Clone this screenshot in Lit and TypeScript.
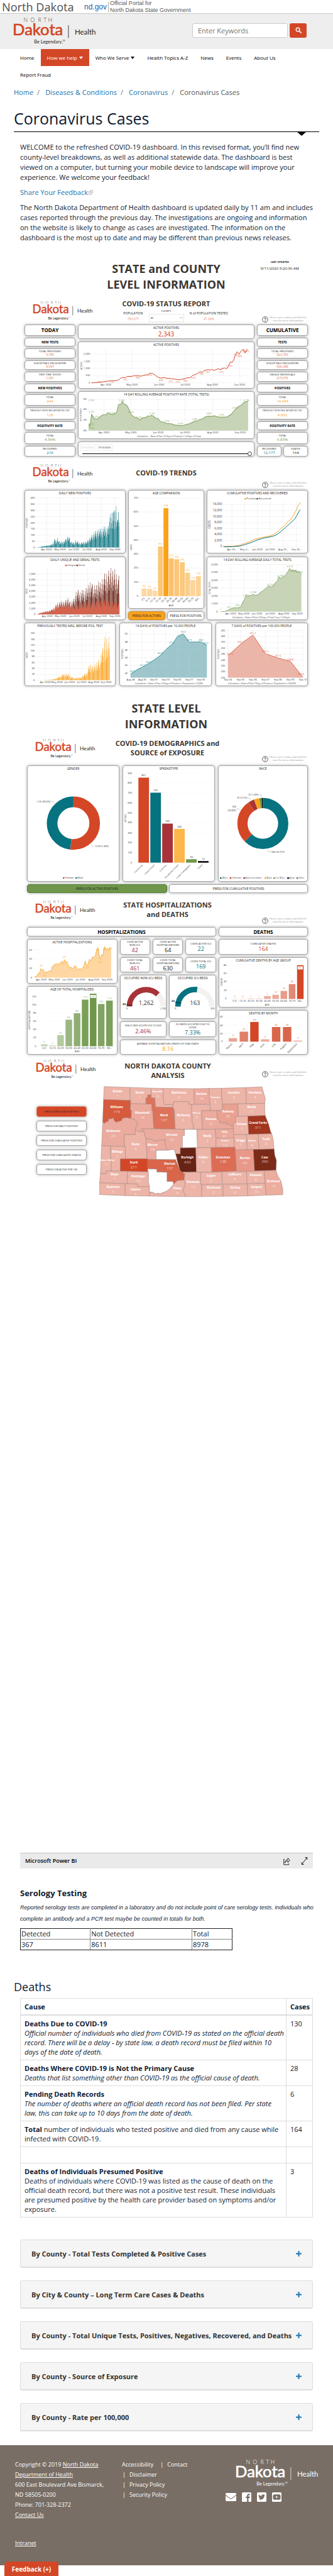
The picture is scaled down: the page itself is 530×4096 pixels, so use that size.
import { LitElement, html, svg, css } from "lit";
import { customElement, property } from "lit/decorators.js";
import { classMap } from "lit/directives/class-map.js";

type Box = [number, number, number, number];
type Label = [string | number, number, number, string?, number?, string?, number?];

/* ---------- chart helpers: sheet units are half width, ky height ---------- */

const LINE = 1 / 3;
const TREND = 1 / 2.8;
const HEAD = 15;

const texts = (ky: number, labels: Label[]) =>
  labels.map(([t, x, y, anchor = "middle", size = 6, cls = "ink", rot = 0]) => {
    const px = x / 2;
    const py = y * ky;
    return svg`<text class=${cls} x=${px} y=${py} text-anchor=${anchor} font-size=${size}
      transform=${`rotate(${rot} ${px} ${py})`}>${t}</text>`;
  });

const plot = (ky: number, [x0, y0, x1, y1]: Box, name: string, shapes: unknown, labels: Label[], raw: unknown = "") => html`
  <svg class="plot" role="img" aria-label=${name}
    viewBox="${(x0 + 3) / 2} ${y0 * ky + HEAD} ${(x1 - x0 - 6) / 2} ${(y1 - y0) * ky - HEAD - 1}">
    ${svg`<g transform=${`scale(0.5 ${ky})`}>${shapes}</g>${raw}${texts(ky, labels)}`}
  </svg>`;

const rules = (x0: number, x1: number, ys: number[], y0 = 0, y1 = 0, xs: number[] = []) =>
  svg`<path class="rule" d=${ys.map((y) => `M${x0} ${y}H${x1}`).join("") + xs.map((x) => `M${x} ${y0}V${y1}`).join("")}></path>`;

const line = (points: string, color: string) =>
  svg`<polyline class="trace" points=${points} stroke=${color}></polyline>`;

const area = (points: string, base: number, fill: string, stroke: string) => {
  const all = points.split(" ");
  const first = all[0].split(",")[0];
  const last = all[all.length - 1].split(",")[0];
  return svg`<polygon points=${`${first},${base} ${points} ${last},${base}`} fill=${fill}></polygon>${line(points, stroke)}`;
};

const steps = (x: number, ys: number[], names: (string | number)[], size = 6): Label[] =>
  ys.map((y, i) => [names[i], x, y + 5, "end", size]);

const along = (y: number, xs: number[], names: string[], size = 6): Label[] =>
  xs.map((x, i) => [names[i], x, y, "middle", size]);

const MONTHS = ["Apr 2020", "May 2020", "Jun 2020", "Jul 2020", "Aug 2020", "Sep 2020"];

/* Daily columns between knots of [x, value], with a day to day swing. */
const daily = (knots: [number, number][], base: number, unit: number, color: string, seed: number) => {
  const tones = ["", ""];
  const end = knots[knots.length - 1][0];
  let i = 0;
  let k = 0;
  for (let x = knots[0][0]; x < end; x += 2.07, i++) {
    while (k < knots.length - 2 && x > knots[k + 1][0]) k++;
    const [xa, va] = knots[k];
    const [xb, vb] = knots[k + 1];
    const swing = 0.5 + (((i * 37 + seed * 11) * 53) % 97) / 97 * 0.6;
    const top = base - (va + ((vb - va) * (x - xa)) / (xb - xa)) * swing * unit;
    tones[Math.floor(i / 5) % 2] += `M${x.toFixed(1)} ${base}V${top.toFixed(1)}h2.1V${base}z`;
  }
  return svg`<path d=${tones[0]} fill=${color}></path><path d=${tones[1]} fill=${color} opacity="0.75"></path>`;
};

const columns = (xs: number[], tops: number[], width: number, base: number, colors: string[]) =>
  xs.map((x, i) => svg`<rect x=${x} y=${tops[i]} width=${width} height=${base - tops[i]} fill=${colors[i % colors.length]}></rect>`);

const ring = (cx: number, cy: number, r: number, w: number, parts: [number, string][]) => {
  let start = 0;
  return parts.map(([share, color]) => {
    const turn = start * 3.6 - 90;
    start += share;
    return svg`<circle cx=${cx} cy=${cy} r=${r} fill="none" stroke=${color} stroke-width=${w} pathLength="100"
      stroke-dasharray=${`${share} ${100 - share}`} transform=${`rotate(${turn} ${cx} ${cy})`}></circle>`;
  });
};

const gauge = (cx: number, cy: number, share: number, mark: number, color: string) => {
  const arc = `M${cx - 40} ${cy}A40 40 0 0 1 ${cx + 40} ${cy}`;
  const a = Math.PI * (1 - mark);
  const at = (r: number) => `${cx + r * Math.cos(a)} ${cy - r * Math.sin(a)}`;
  return svg`<path d=${arc} fill="none" stroke="#f3f2f1" stroke-width="13"></path>
    <path d=${arc} fill="none" stroke=${color} stroke-width="13" pathLength="100" stroke-dasharray=${`${share * 100} 200`}></path>
    <path d=${`M${at(33)}L${at(48)}`} stroke="#000" stroke-width="1"></path>`;
};

/* ---------- chart content ---------- */

const RED = "#d34727";
const GREEN = "#7da05c";
const TEAL = "#077280";

const activePositives = () => {
  const box: Box = [368, 435, 1197, 770];
  const ys = [525, 576, 627, 678, 730];
  const xs = [496, 620, 749, 874, 1003, 1132];
  const pts = "427,730 460,727 480,723 500,719 520,715 545,714 556,710 565,698 575,692 590,692 598,684 618,684 628,680 655,680 662,683 672,678 685,673 695,673 702,662 716,662 724,669 735,681 745,691 760,697 770,691 780,696 795,698 810,701 825,704 840,708 858,705 872,700 882,694 895,694 908,678 918,672 930,665 938,655 948,651 955,656 963,642 975,638 985,635 990,640 998,634 1004,640 1020,637 1028,630 1045,636 1048,626 1060,625 1062,622 1068,629 1075,622 1080,605 1088,582 1097,584 1104,566 1110,537 1120,508 1130,524 1138,505 1150,490 1158,517 1165,495 1171,490";
  const marks: [string, number, number][] = [["28", 463, 730], ["132", 525, 731], ["376", 588, 714], ["490", 647, 701], ["670", 704, 683], ["320", 758, 718], ["272", 804, 725], ["210", 837, 731], ["300", 874, 722], ["520", 912, 699], ["768", 949, 675], ["921", 982, 659], ["915", 1045, 659], ["1,320", 1082, 616], ["2,161", 1119, 533], ["1,999", 1128, 548], ["2,343", 1161, 512]];
  return plot(LINE, box, "Active positives", [rules(426, 1175, ys, 490, 730, xs), line(pts, RED)], [
    ...steps(420, ys, ["2,000", "1,500", "1,000", "500", "0"]),
    ...along(749, xs, MONTHS),
    ...marks.map(([t, x, y]): Label => [t, x, y, "middle", 6, "coral"]),
    ["ACTIVES", 384, 608, "middle", 5, "ink", -90],
  ]);
};

const positivityRate = () => {
  const box: Box = [368, 786, 1197, 1123];
  const ys = [844, 917, 991, 1065];
  const xs = [489, 616, 745, 871, 1002, 1132];
  const pts = "417,1020 422,1038 426,1000 431,948 436,965 444,982 458,982 464,976 470,967 484,953 498,953 508,938 518,948 532,950 545,942 552,925 557,884 563,879 570,878 575,857 585,880 592,880 600,893 610,925 618,953 628,965 638,973 648,975 656,990 668,978 676,973 686,974 695,962 708,961 715,957 725,966 734,978 745,979 755,1002 770,1006 785,1014 810,1018 822,1026 850,1030 865,1028 875,1022 890,1018 905,1008 915,1000 930,997 942,984 952,984 965,970 980,963 1000,964 1010,960 1018,966 1035,970 1070,969 1078,960 1090,950 1100,930 1110,915 1124,894 1132,890 1140,880 1152,862 1160,862 1169,855";
  const marks: [string, number, number][] = [["5.9%", 430, 857], ["5.6%", 573, 857], ["3.2%", 430, 938], ["2.2%", 449, 975], ["3.1%", 528, 945], ["3.1%", 616, 941], ["2.1%", 653, 979], ["2.9%", 716, 950], ["1.4%", 784, 1004], ["0.9%", 850, 1022], ["1.8%", 917, 989], ["2.8%", 984, 953], ["2.5%", 1043, 962], ["3.9%", 1107, 911], ["5.7%", 1162, 857], ["0.8%", 429, 1028], ["0.0%", 429, 1055]];
  return plot(LINE, box, "Positivity rate", [area(pts, 1065, "#c7d4b6", GREEN), rules(415, 1172, ys, 844, 1065, xs)], [
    ...steps(408, ys, ["6%", "4%", "2%", "0%"]),
    ...along(1085, xs, MONTHS),
    ...marks.map(([t, x, y]): Label => [t, x, y, "middle", 6, "leaf"]),
    ["% POSITIVITY", 384, 953, "middle", 5, "ink", -90],
    ["Calculation = (Sum of Past 14 Days of Positives / 14 Days of Tests)", 796, 1109, "middle", 5],
  ]);
};

const dailyNew = () => {
  const ys = [588, 548, 507, 466, 426, 385, 344, 303, 263];
  const xs = [220, 284, 349, 412, 477, 542];
  const knots: [number, number][] = [[176, 1], [190, 6], [210, 14], [225, 18], [245, 24], [252, 40], [256, 95], [262, 40], [272, 75], [280, 45], [300, 50], [315, 80], [325, 88], [335, 45], [350, 40], [357, 60], [370, 38], [400, 42], [415, 60], [425, 90], [440, 105], [455, 145], [470, 135], [480, 150], [490, 160], [500, 165], [510, 170], [516, 260], [520, 250], [530, 290], [534, 360], [540, 250], [545, 350], [550, 330], [555, 250], [560, 330], [563, 240]];
  return plot(TREND, [117, 209, 591, 626], "Daily new positives", [rules(172, 565, ys, 263, 588, xs), daily(knots, 588, 0.812, "#2b8792", 3)], [
    ...steps(165, ys, [0, 50, 100, 150, 200, 250, 300, 350, 400]),
    ...along(606, xs, MONTHS),
    ["POSITIVES", 132, 427, "middle", 5, "ink", -90],
  ]);
};

const dots = (y: number, items: [string, string, number][], size = 6): { raw: (ky: number) => unknown; labels: Label[] } => ({
  raw: (ky) => items.map(([, color, x]) => svg`<circle cx=${x / 2 - 3} cy=${(y - 5) * ky} r="2" fill=${color}></circle>`),
  labels: items.map(([t, , x]): Label => [t, x, y, "start", size]),
});

const dailyTests = () => {
  const ys = [1027, 989, 951, 913, 876, 838, 800, 762];
  const xs = [224, 286, 351, 413, 478, 542];
  const total: [number, number][] = [[178, 30], [190, 250], [210, 450], [240, 700], [260, 1000], [270, 2000], [300, 2200], [320, 2600], [335, 1900], [350, 2900], [360, 4000], [380, 3800], [400, 4400], [415, 4600], [428, 6000], [440, 4400], [460, 5300], [480, 5800], [500, 7000], [515, 7300], [535, 7500], [550, 7000], [562, 6300]];
  const unique: [number, number][] = [[178, 20], [190, 240], [240, 700], [270, 1800], [320, 2000], [350, 1500], [380, 1700], [420, 2000], [470, 2300], [520, 2200], [562, 1900]];
  const legend = dots(711, [["Unique", "#d9583c", 318], ["Serial", "#7a3528", 370]]);
  return plot(TREND, [117, 647, 591, 1064], "Daily unique and serial tests",
    [rules(172, 562, ys, 728, 1027, xs), daily(total, 1027, 0.0379, "#7e4034", 5), daily(unique, 1027, 0.0379, "#dc6048", 8)],
    [...steps(168, ys, ["0", "1,000", "2,000", "3,000", "4,000", "5,000", "6,000", "7,000"]), ...along(1046, xs, MONTHS), ...legend.labels,
      ["TESTS", 132, 876, "middle", 5, "ink", -90]],
    legend.raw(TREND));
};

const ages = () => {
  const ys = [910, 818, 725, 633, 540, 448, 355, 263];
  const xs = [665, 691, 716, 742, 768, 793, 819, 845, 870, 895, 921];
  const tops = [860, 862, 874, 583, 330, 661, 667, 686, 755, 804, 778];
  const cats = ["0-5", "6-11", "12-14", "15-19", "20-29", "30-39", "40-49", "50-59", "60-69", "70-79", "80+"];
  const counts = [56, 54, 42, 355, 628, 272, 263, 244, 169, 116, 144];
  const tones = ["#fdd7a0", "#fdd7a0", "#fdd9a6", "#fcc676", "#faa21b", "#fcc06a", "#fcc678", "#fcc87c", "#fcce8a", "#fdd49a", "#fdd294"];
  return plot(TREND, [603, 209, 960, 992], "Age comparison", [rules(653, 950, ys), columns(xs, tops, 23, 910, tones)], [
    ...steps(648, ys, [0, 100, 200, 300, 400, 500, 600, 700]),
    ...counts.map((n, i): Label => [n, xs[i] + 11, tops[i] - 11, "middle", 6, "amber"]),
    ...cats.map((c, i): Label => [c, xs[i] + 16, 926, "end", 6, "ink", -40]),
    ["AGE", 804, 978],
    ["CASES", 619, 588, "middle", 5, "ink", -90],
  ]);
};

const cumulative = () => {
  const ys = [583, 543, 504, 464, 425, 385, 345, 305];
  const xs = [1090, 1149, 1210, 1270, 1331, 1393];
  const up = "1050,582 1090,580 1120,575 1140,566 1155,558 1170,552 1190,537 1210,530 1230,523 1270,512 1285,503 1300,490 1320,465 1340,440 1355,415 1363,410 1372,390 1380,375 1387,352 1393,343 1398,320 1406,303 1411,291";
  const low = "1050,584 1090,583 1130,578 1150,569 1170,561 1190,550 1210,538 1240,526 1270,518 1285,513 1300,504 1320,484 1345,452 1360,433 1372,418 1385,400 1395,378 1403,355 1411,340";
  const legend = dots(273, [["Positives", "#faa21b", 1159], ["Recovered", TEAL, 1215]]);
  return plot(TREND, [972, 209, 1445, 626], "Cumulative positives and recovered",
    [rules(1050, 1418, ys, 290, 583, xs), line(up, "#fba630"), line(low, TEAL)],
    [...steps(1043, ys, ["0", "2,000", "4,000", "6,000", "8,000", "10,000", "12,000", "14,000"], 7),
      ...along(607, xs, ["Apr 20…", "May 2…", "Jun 2020", "Jul 2020", "Aug 20…", "Sep 20…"], 6),
      ...legend.labels, ["CASES", 990, 437, "middle", 7, "ink", -90]],
    legend.raw(TREND));
};

const totalTests = () => {
  const ys = [1010, 958, 906, 855, 803, 751, 700];
  const xs = [1084, 1146, 1208, 1270, 1334, 1397];
  const pts = "1038,1010 1055,1009 1070,1001 1080,993 1098,984 1110,984 1122,984 1132,975 1140,950 1148,930 1153,912 1160,905 1168,908 1180,902 1192,896 1200,902 1210,900 1222,885 1235,872 1245,860 1255,850 1262,838 1272,848 1283,842 1290,826 1303,808 1310,780 1318,790 1330,782 1338,775 1345,762 1352,748 1357,735 1362,726 1368,745 1375,732 1382,748 1388,736 1395,752 1400,745 1408,748 1416,766";
  const marks: [string, number, number][] = [["1", 1038, 1001], ["251", 1076, 987], ["495", 1116, 976], ["1,894", 1156, 909], ["2,228", 1189, 886], ["3,154", 1270, 838], ["4,293", 1318, 780], ["5,507", 1362, 716], ["4,898", 1380, 745], ["4,754", 1407, 757]];
  return plot(TREND, [972, 647, 1445, 1064], "14 day rolling average daily total tests",
    [area(pts, 1010, "#c7d4b6", "#8dab70"), rules(1030, 1420, ys, 700, 1010, xs)],
    [...steps(1023, ys, ["0", "1,000", "2,000", "3,000", "4,000", "5,000", "6,000"]), ...along(1029, xs, MONTHS),
      ...marks.map(([t, x, y]): Label => [t, x, y, "middle", 6, "leaf"]),
      ["TOTAL TESTS", 988, 855, "middle", 5, "ink", -90],
      ["Calculation = (Sum of Past 14 Days of Total Tests / 14 Days)", 1226, 1052, "middle", 5]]);
};

const previouslyTested = () => {
  const ys = [1461, 1422, 1384, 1345, 1306, 1268, 1229, 1190, 1151];
  const xs = [215, 271, 330, 387, 444, 502];
  const knots: [number, number][] = [[210, 1], [250, 3], [270, 8], [290, 16], [300, 22], [325, 20], [335, 12], [350, 8], [380, 9], [395, 18], [410, 26], [425, 58], [440, 45], [455, 58], [465, 68], [475, 60], [480, 110], [488, 110], [495, 150], [499, 90], [505, 155], [512, 140], [519, 150]];
  return plot(TREND, [117, 1081, 547, 1498], "Previously tested negative", [rules(172, 520, ys, 1134, 1461, xs), daily(knots, 1461, 1.94, "#fbb040", 6)], [
    ...steps(165, ys, [0, 20, 40, 60, 80, 100, 120, 140, 160]),
    ...along(1480, xs, MONTHS),
    ["CASES", 132, 1296, "middle", 5, "ink", -90],
  ]);
};

const fourteenDays = () => {
  const ys = [1417, 1364, 1312, 1261, 1209, 1157];
  const xs = [617, 672, 727, 782, 837, 893, 948];
  const pts = "617,1421 645,1393 672,1374 700,1352 727,1328 757,1297 782,1260 815,1220 838,1171 865,1156 893,1210 948,1208 976,1230";
  const marks: [string, number, number][] = [["39.9", 624, 1410], ["41.7", 672, 1365], ["42.5", 700, 1345], ["44.6", 755, 1290], ["47.4", 810, 1218], ["50.0", 865, 1147], ["47.9", 893, 1203], ["48.0", 948, 1200], ["47.2", 971, 1223]];
  return plot(TREND, [565, 1081, 998, 1498], "14 days of positives per 10,000 people",
    [area(pts, 1443, "#9cc6cc", "#3e929c"), rules(612, 984, ys, 1134, 1443, xs)],
    [...steps(603, ys, [40, 42, 44, 46, 48, 50]), ...along(1461, xs, ["Aug 28", "Aug 30", "Sep 01", "Sep 03", "Sep 05", "Sep 07", "Sep 09"]),
      ...marks.map(([t, x, y]): Label => [t, x, y, "middle", 6, "teal"]),
      ["POSITIVES", 581, 1287, "middle", 5, "ink", -90],
      ["Calculation = (Sum of Past 14 Days of Positives / Population) x 10,000", 797, 1485, "middle", 5]]);
};

const sevenDays = () => {
  const ys = [1443, 1403, 1366, 1327, 1289, 1249, 1211, 1172, 1134];
  const xs = [1073, 1132, 1190, 1249, 1307, 1366, 1425];
  const pts = "1073,1299 1132,1223 1190,1163 1249,1286 1307,1314 1366,1336 1425,1439";
  const marks: [string, number, number][] = [["243.5", 1082, 1293], ["253.7", 1132, 1214], ["261.2", 1190, 1155], ["245.4", 1249, 1277], ["241.6", 1307, 1307], ["238.8", 1366, 1328], ["225.9", 1416, 1427]];
  return plot(TREND, [1016, 1081, 1447, 1498], "7 days of positives per 100,000 people",
    [area(pts, 1443, "#edb4a8", "#dd6a52"), rules(1066, 1428, ys, 1134, 1443, xs)],
    [...steps(1060, ys, [225, 230, 235, 240, 245, 250, 255, 260, 265]), ...along(1461, xs, ["Sep 04", "Sep 05", "Sep 06", "Sep 07", "Sep 08", "Sep 09", "Sep 10"]),
      ...marks.map(([t, x, y]): Label => [t, x, y, "middle", 6, "coral"]),
      ["POSITIVES", 1031, 1287, "middle", 5, "ink", -90],
      ["Calculation = (Sum of Past 7 Days of Positives / Population) x 100,000", 1232, 1485, "middle", 5]]);
};

const gender = () => {
  const legend = dots(1315, [["Female", RED, 304], ["Male", TEAL, 363]]);
  return plot(LINE, [127, 516, 559, 1335], "Gender",
    svg`<path class="lead" d="M239 771h10l8 14M425 1073l7 14h9"></path>`,
    [...legend.labels, ["1125 (48.02%)", 236, 776, "end", 5], ["1218 (51.98%)", 445, 1094, "start", 5]],
    [ring(172, 308, 50, 25, [[51.98, RED], [48.02, TEAL]]), legend.raw(LINE)]);
};

const spread = () => {
  const ys = [1202, 1131, 1062, 993, 921, 852, 782, 711, 642, 573];
  const xs = [649, 705, 761, 817, 873, 929];
  const tops = [603, 709, 927, 964, 1178, 1191];
  const counts = [857, 705, 393, 340, 34, 14];
  const cats = ["Community", "Close Contact", "Unknown", "Household Contact", "Under Investigation", "Travel"];
  return plot(LINE, [575, 516, 1008, 1335], "Spread type",
    [svg`<g class="faint">${rules(630, 1000, ys)}</g>`, columns(xs, tops, 50, 1202, [RED, TEAL, "#a73338", "#fdb64a", "#6f964a", "#000"])],
    [...steps(619, ys, [0, 100, 200, 300, 400, 500, 600, 700, 800, 900]),
      ...counts.map((n, i): Label => [n, xs[i] + 25, tops[i] - 10]),
      ...cats.map((c, i): Label => [c, xs[i] + 22, 1220, "end", 5, "ink", -45]),
      ["ACTIVES", 592, 888, "middle", 5, "ink", -90]]);
};

const race = () => {
  const legend = dots(1316, [["White", TEAL, 1043], ["Unknown", RED, 1089], ["American Indian", "#a73338", 1153], ["Black", "#faa21b", 1253], ["2 or More", "#6f964a", 1294], ["Asian", "#000", 1360], ["Other", "#7a6f66", 1403]], 5);
  return plot(LINE, [1024, 516, 1447, 1335], "Race",
    svg`<path class="lead" d="M1218 724h8l2 14M1165 747h8l5 12M1111 822h10l9 8M1258 1110l4 16h8"></path>`,
    [...legend.labels, ["35 (1.49%)", 1215, 728, "end", 5], ["87 (3.71%)", 1162, 752, "end", 5], ["658", 1109, 815, "end", 5], ["(28.08%)", 1109, 839, "end", 5], ["1466 (62.57%)", 1272, 1133, "start", 5]],
    [ring(617.5, 308.7, 48, 24, [[62.57, TEAL], [28.08, RED], [3.71, "#a73338"], [3.4, "#faa21b"], [1.49, "#6f964a"], [0.75, "#000"]]), legend.raw(LINE)]);
};

const activeHospital = () => {
  const ys = [609, 543, 478, 414];
  const xs = [194, 256, 319, 380, 443, 506];
  const pts = "163,600 168,603 176,590 180,577 186,578 192,545 200,556 204,550 208,572 212,580 216,567 224,570 232,560 240,566 246,530 256,515 260,522 264,507 272,520 276,508 280,516 286,500 292,492 298,510 303,481 310,500 314,492 320,512 328,543 334,532 342,548 350,530 356,524 364,545 370,555 376,543 384,552 392,535 398,520 402,490 408,520 416,512 422,478 430,490 436,462 444,465 450,455 456,412 462,395 467,430 472,478 480,445 486,455 491,400 495,388 500,410 508,400 512,418 518,398 525,400";
  const marks: [string, number, number][] = [["20", 193, 532], ["10", 210, 602], ["39", 302, 470], ["66", 462, 418], ["40", 471, 503], ["27", 413, 546], ["68", 494, 413], ["64", 521, 404]];
  return plot(LINE, [127, 334, 553, 650], "Active hospitalizations",
    [svg`<g class="faint">${rules(160, 530, ys)}</g>`, area(pts, 609, "#fdd6a1", "#fbb448")],
    [...steps(150, ys, [0, 20, 40, 60]), ...along(629, xs, MONTHS), ...marks.map(([t, x, y]): Label => [t, x, y, "middle", 6, "amber"])]);
};

const AGES = ["0-9", "10-19", "20-29", "30-39", "40-49", "50-59", "60-69", "70-79", "80+"];

const ageHospital = () => {
  const ys = [1089, 1029, 972, 912, 855, 796, 738];
  const xs = [193, 232, 270, 309, 348, 386, 424, 462, 501];
  const tops = [1075, 1083, 1010, 901, 855, 759, 717, 790, 766];
  const counts = [5, 2, 27, 64, 80, 113, 127, 102, 110];
  const tones = ["#c4d5b3", "#c4d5b3", "#b4caa0", "#9bb682", "#90ae74", "#7a9f57", "#6f964a", "#81a462", "#7c9f5a"];
  return plot(LINE, [127, 663, 553, 1147], "Age of total hospitalized",
    [svg`<g class="faint">${rules(178, 542, ys)}</g>`, columns(xs, tops, 31, 1089, tones), svg`<rect x="426" y="726" width="27" height="21" fill="#fff"></rect>`],
    [...steps(170, ys, [0, 20, 40, 60, 80, 100, 120]),
      ...counts.map((n, i): Label => [n, xs[i] + 15, i === 6 ? 743 : tops[i] - 10, "middle", 6, "leaf"]),
      ...along(1109, xs.map((x) => x + 15), AGES), ["AGE", 364, 1133], ["HOSPITALIZATIONS", 143, 903, "middle", 5, "ink", -90]]);
};

const bedsGeneral = () =>
  plot(LINE, [563, 587, 787, 894], "Occupied non-ICU beds", "",
    [["1,262", 688, 801, "middle", 14], ["0", 596, 830], ["1,706", 767, 830], ["42", 583, 798, "middle", 6, "strong"]],
    gauge(344, 270, 0.74, 0.025, "#a73338"));

const bedsIcu = () =>
  plot(LINE, [798, 587, 1020, 894], "Occupied ICU beds", "",
    [["163", 921, 801, "middle", 14], ["0", 828, 830], ["300", 1004, 830], ["22", 817, 775, "middle", 6, "strong"]],
    gauge(460, 270, 0.543, 0.073, TEAL));

const deathsByAge = () => {
  const ys = [753, 693, 633, 573, 513];
  const xs = [1090, 1128, 1167, 1206, 1245, 1284, 1323, 1362, 1401];
  const tops = [753, 753, 751, 751, 733, 724, 697, 648, 514];
  const counts = [0, 0, 1, 1, 7, 10, 19, 35, 91];
  return plot(LINE, [1030, 457, 1452, 813], "Cumulative deaths by age group",
    [svg`<g class="faint">${rules(1075, 1442, ys)}</g>`, columns(xs, tops, 31, 754, ["#edb4a8", "#edb4a8", "#edb4a8", "#edb4a8", "#ecada0", "#ebaa9c", "#e79d8d", "#e28975", RED]), svg`<rect x="1404" y="522" width="24" height="22" fill="#fff"></rect>`],
    [...steps(1067, ys, [0, 20, 40, 60, 80]),
      ...counts.map((n, i): Label => [n, xs[i] + 15, i === 8 ? 539 : tops[i] - 10, "middle", 6, "coral"]),
      ...along(776, xs.map((x) => x + 15), AGES), ["AGE", 1260, 800], ["DEATHS", 1047, 633, "middle", 5, "ink", -90]]);
};

const deathsByMonth = () => {
  const ys = [1056, 999, 941, 882];
  const xs = [1077, 1129, 1179, 1230, 1282, 1334, 1385];
  const tops = [1031, 985, 916, 1039, 952, 952, 1048];
  const counts = [9, 25, 49, 6, 36, 36, 3];
  return plot(LINE, [1030, 831, 1452, 1147], "Deaths by month",
    [svg`<g class="faint">${rules(1060, 1445, ys)}</g>`, columns(xs, tops, 40, 1056, ["#e9a595", "#e07f6a", RED, "#ecac9e", "#d9664b", "#d9664b", "#edb2a5"])],
    [...steps(1049, ys, [0, 20, 40, 60]),
      ...counts.map((n, i): Label => [n, xs[i] + 20, tops[i] - 10, "middle", 6, "coral"]),
      ...["March", "April", "May", "June", "July", "August", "September"].map((m, i): Label => [m, xs[i] + 18, 1074, "end", 6, "ink", -45])]);
};

/* ---------- county map ---------- */

type County = [string, number, number, number, string, string, number?];

const PALE = "#edb4a8";
const SOFT = "#ebab9e";
const COUNTIES: County[] = [
  ["Divide", 1, 556, 307, PALE, "493,264 614,270 614,341 617,362 490,356"],
  ["Burke", 1, 661, 313, PALE, "614,270 714,275 714,322 698,324 698,343 690,345 690,387 618,385 617,345"],
  ["Renville", 4, 745, 305, PALE, "714,275 771,277 771,345 775,390 818,392 818,412 734,409 732,345 714,344", 6],
  ["Bottineau", 6, 846, 313, PALE, "771,277 916,279 916,350 920,390 892,390 890,370 820,370 820,391 775,390 771,345"],
  ["Rolette", 14, 952, 325, SOFT, "916,279 988,277 988,346 992,389 920,390 916,350"],
  ["Towner", 2, 1017, 345, PALE, "988,277 1046,276 1046,345 1050,348 1050,433 993,434 991,348", 6],
  ["Cavalier", 3, 1104, 316, PALE, "1046,276 1160,271 1164,384 1050,388 1050,348 1046,345"],
  ["Pembina", 4, 1204, 316, PALE, "1160,271 1237,266 1245,310 1253,350 1250,382 1164,384"],
  ["Walsh", 11, 1188, 415, PALE, "1122,387 1250,382 1250,430 1252,469 1126,473"],
  ["Ramsey", 36, 1077, 449, "#e9a191", "1050,388 1122,387 1126,473 1112,475 1112,517 1102,520 1102,545 1090,545 1082,527 1074,540 1068,515 1055,530 1048,515 1040,522 1038,505 1025,485 1024,434 1050,433"],
  ["Williams", 179, 552, 415, "#d65a3c", "490,356 617,362 617,430 622,432 620,490 600,484 580,488 575,505 548,516 540,503 536,485 522,495 515,490 512,510 500,515 498,525 486,515"],
  ["McKenzie", 23, 536, 587, SOFT, "486,515 498,525 500,515 512,510 515,490 522,495 536,485 540,503 548,516 575,505 580,488 600,484 620,490 640,500 651,525 640,560 640,604 588,602 588,688 481,682"],
  ["Mountrail", 14, 673, 455, SOFT, "618,385 717,388 718,432 722,435 727,562 671,562 670,572 681,578 675,584 650,580 640,565 651,525 640,500 620,490 622,432 617,430"],
  ["Ward", 127, 775, 475, "#dd735b", "698,324 714,322 714,344 732,345 734,409 818,412 824,432 824,470 828,565 727,562 722,435 718,432 717,388 690,387 690,345 698,343"],
  ["McHenry", 9, 866, 473, PALE, "820,370 890,370 892,390 905,391 908,520 913,523 915,566 828,565 824,432 818,412"],
  ["Pierce", 3, 928, 455, PALE, "905,391 993,391 993,434 953,434 953,480 957,566 915,566 913,523 908,520", 6],
  ["Benson", 21, 997, 503, SOFT, "953,434 1024,434 1025,485 1038,505 1040,522 1048,515 1055,530 1068,515 1074,540 1082,527 1090,545 1102,545 1102,562 957,566 953,480"],
  ["Nelson", 1, 1142, 536, PALE, "1112,475 1170,473 1174,602 1104,604 1102,520 1112,517"],
  ["Grand Forks", 311, 1218, 527, "#a2361f", "1170,473 1252,469 1268,530 1278,585 1283,597 1174,602"],
  ["McLean", 22, 812, 611, SOFT, "671,562 872,566 872,610 862,612 862,697 852,697 852,740 830,740 822,707 795,712 785,700 778,660 782,640 760,642 735,650 720,638 690,632 684,610 681,578 670,572"],
  ["", 0, 0, 0, "#ffffff", "872,566 930,567 933,695 862,697 862,612 872,610"],
  ["Wells", 2, 979, 623, PALE, "930,567 1016,566 1020,625 1020,693 933,695"],
  ["Eddy", 21, 1061, 591, SOFT, "1016,566 1102,562 1104,628 1020,629", 6],
  ["Foster", 12, 1063, 654, PALE, "1020,629 1104,628 1108,692 1020,693", 6],
  ["Griggs", 2, 1137, 650, PALE, "1104,604 1164,603 1167,710 1112,712 1106,690"],
  ["Steele", 4, 1190, 653, PALE, "1164,603 1219,600 1223,708 1167,710", 6],
  ["Traill", 8, 1256, 643, PALE, "1219,600 1283,597 1290,640 1294,705 1223,708"],
  ["Dunn", 4, 641, 677, PALE, "588,602 640,604 640,565 650,580 675,584 681,578 684,610 690,632 690,690 694,692 694,775 593,774 593,688 588,688"],
  ["Mercer", 19, 721, 684, SOFT, "690,632 720,638 735,650 760,642 782,640 778,660 785,700 795,712 738,715 738,779 695,778 694,692 690,690"],
  ["", 0, 0, 0, "#ffffff", "738,715 795,714 822,707 830,740 836,770 830,781 738,779"],
  ["Golden Valley", 7, 501, 791, PALE, "481,682 523,685 523,770 527,772 527,860 504,860 502,880 475,878", 6],
  ["Billings", 1, 555, 731, PALE, "523,685 593,688 593,774 569,775 569,861 527,860 527,772 523,770"],
  ["Stark", 211, 633, 809, RED, "569,775 698,774 698,866 569,861"],
  ["Morton", 157, 802, 815, "#d9654a", "698,779 830,781 850,855 873,880 870,925 838,928 820,955 817,935 789,935 789,870 741,868 741,847 698,846"],
  ["Burleigh", 430, 885, 773, "#672314", "852,697 925,696 928,867 860,868 850,855 836,780 836,770 830,740 852,740"],
  ["Kidder", 8, 961, 773, PALE, "925,696 996,695 1001,868 928,869"],
  ["Stutsman", 138, 1053, 770, "#dc6d55", "996,695 1110,692 1117,862 1001,868"],
  ["Barnes", 44, 1156, 776, "#e8998a", "1112,712 1196,709 1202,862 1117,864"],
  ["Cass", 390, 1250, 770, "#7c2a18", "1196,709 1294,705 1297,750 1305,785 1303,855 1202,860"],
  ["Slope", 1, 542, 890, PALE, "502,880 504,860 603,864 602,950 471,944 475,878"],
  ["Hettinger", 10, 654, 905, PALE, "603,864 702,867 702,940 707,972 650,970 650,952 602,950"],
  ["Bowman", 4, 535, 980, PALE, "471,944 592,950 592,1035 470,1027"],
  ["Adams", 3, 641, 998, PALE, "592,950 650,952 650,970 707,972 707,1038 592,1035"],
  ["", 0, 0, 0, "#ffffff", "698,846 741,847 741,868 789,870 789,935 817,935 820,955 800,990 785,1005 772,1012 755,1022 748,1017 735,1022 720,1010 707,1010 707,972 702,940 702,867"],
  ["Sioux", 9, 838, 989, PALE, "838,928 870,925 875,950 866,1000 878,1042 707,1038 707,1010 720,1010 735,1022 748,1017 755,1022 772,1012 785,1005 800,990 820,955"],
  ["Emmons", 10, 912, 947, PALE, "873,870 948,869 948,955 953,957 952,1042 878,1042 866,1000 875,950 870,925 873,880"],
  ["Logan", 2, 997, 902, PALE, "948,869 1048,868 1048,953 948,955"],
  ["McIntosh", 2, 1009, 986, PALE, "953,957 1053,955 1053,1040 952,1042"],
  ["LaMoure", 9, 1109, 893, PALE, "1048,868 1164,864 1167,950 1051,954"],
  ["Dickey", 6, 1111, 986, PALE, "1053,955 1168,952 1170,1037 1053,1040"],
  ["Ransom", 8, 1208, 896, PALE, "1164,864 1247,861 1251,947 1167,950"],
  ["Sargent", 10, 1211, 980, PALE, "1168,952 1251,947 1256,1032 1170,1037"],
  ["Richland", 19, 1290, 941, "#ecac9e", "1247,861 1303,856 1310,890 1327,935 1335,990 1335,1028 1256,1032"],
];

const countyMap = () => html`
  <svg class="map" role="img" aria-label="Active positives by county" viewBox="235 87 434 262">
    ${svg`<g transform="scale(0.5 0.3333)">${COUNTIES.map((c) => svg`<polygon class="county" points=${c[5]} fill=${c[4]}></polygon>`)}</g>
    ${texts(LINE, COUNTIES.filter((c) => c[0]).flatMap(([name, n, x, y, , , size = 7]): Label[] => [
      [name, x, y, "middle", size, "county-name"],
      [n, x, y + 35, "middle", 9, "county-count"],
    ]))}`}
  </svg>`;

/* ---------- small pieces ---------- */

const help = html`
  <div class="help">
    <svg viewBox="0 0 14 14" aria-hidden="true"><circle cx="7" cy="7" r="6.2" fill="none" stroke="#222" stroke-width="1"></circle>
      <path d="M5 5.6c0-2.6 4-2.6 4 0 0 1.4-2 1.5-2 3" fill="none" stroke="#222" stroke-width="1.1"></path><circle cx="7" cy="10.4" r=".8" fill="#222"></circle></svg>
    <p>Hover over a value and click the<br>icon for more information</p>
  </div>`;

const stat = (label: string, value: string, tone: string, extra = "") => html`
  <div class="card stat ${tone} ${extra}"><span>${label}</span><b>${value}</b></div>`;

const chart = (title: string, body: unknown, extra = "") => html`<section class="card chart ${extra}"><h4>${title}</h4>${body}</section>`;

const sideStats = (head: string, tests: string, v: string[], third: string, tail: unknown, pos: string) => html`
  <div class="side">
    <h3 class="card big">${head}</h3>
    <h4 class="card mid">${tests}</h4>
    ${stat("TOTAL PROCESSED", v[0], "coral")}
    ${stat("SUSCEPTIBLE ENCOUNTERS", v[1], "coral")}
    ${stat(third, v[2], "coral")}
    <h4 class="card mid">${pos}</h4>
    ${stat("TOTAL", v[3], "amber", "large")}
    ${stat("PREVIOUSLY TESTED NEG. BEFORE POS. TEST", v[4], "amber", "large tight")}
    <h4 class="card mid">POSITIVITY RATE</h4>
    ${stat("TOTAL", v[5], "leaf", "large")}
    ${tail}
  </div>`;

@customElement("nd-logo")
export class NdLogo extends LitElement {
  @property({ type: Boolean, reflect: true }) light = false;

  static styles = css`
    :host { display: block; }
    svg { display: block; width: 100%; height: auto; overflow: visible; font-family: Lato, "Open Sans", sans-serif; }
    .north { font-size: 13px; font-weight: 300; fill: #444; }
    .name { font-size: 38px; font-weight: 400; fill: #d34727; stroke: #d34727; stroke-width: 1; }
    .dept, .motto { fill: #222; }
    .dept { font-size: 17px; }
    .motto { font-size: 11px; }
    .mark { font-size: 4px; }
    .bar { stroke: #333; stroke-width: 1.4; }
    :host([light]) text { fill: #fff; }
    :host([light]) .name { stroke: #fff; }
    :host([light]) .bar { stroke: #ddd; }
  `;

  render() {
    return html`<svg viewBox="0 0 193 64" role="img" aria-label="North Dakota Health. Be Legendary.">
      <text class="north" x="23 39 57 70 81" y="10">NORTH</text>
      <text class="name" x="-3" y="42">Dakota</text>
      <line class="bar" x1="129" x2="129" y1="18" y2="48"></line>
      <text class="dept" x="144" y="40">Health</text>
      <text class="motto" x="48" y="61">Be Legendary.</text>
      <text class="motto mark" x="115" y="56">TM</text>
    </svg>`;
  }
}

@customElement("app-root")
export class AppRoot extends LitElement {
  static styles = css`
    :host { display: block; background: #fff; color: #0f1b33; font: 11px/16px "Open Sans", sans-serif; }
    * { box-sizing: border-box; }
    h1, h2, h3, h4, p, ul { margin: 0; padding: 0; font-weight: 400; }
    ul { list-style: none; }
    button, input, select { font-family: inherit; margin: 0; }
    button { cursor: pointer; }
    a { color: #1a73ae; text-decoration: none; }

    .portal { display: flex; align-items: center; height: 22px; padding-left: 3px; border-bottom: 1px solid #c8c8c8; color: #58595b; }
    .portal .state { width: 131px; font: 18px/20px "Noto Sans", sans-serif; }
    .portal .nd { padding-right: 2px; border-right: 1px solid #aaa; margin-right: 2px; font: 12px/16px "Liberation Sans", sans-serif; color: #2a62a8; }
    .portal p { font: 9px/11px "Liberation Sans", sans-serif; }

    .mast { display: flex; justify-content: space-between; align-items: center; height: 56px; padding: 0 42px 0 22px; background: #eee; }
    .mast nd-logo { width: 130px; }
    .search { display: flex; gap: 3px; padding-bottom: 4px; }
    .search input { width: 152px; height: 23px; padding: 0 8px; border: 1px solid #ccc; border-radius: 3px; font-size: 11px; background: #fff; }
    .search input::placeholder { color: #757575; }
    .search button { width: 27px; height: 23px; padding: 0; border: 0; border-radius: 3px; background: #d34727; }
    .search svg { display: block; width: 10px; margin: auto; }

    .nav { display: flex; flex-wrap: wrap; padding: 0 22px; }
    .nav a { display: block; padding: 0 10px; font-size: 8px; line-height: 27px; color: #000; }
    .nav .on a { background: #d34727; color: #fff; }
    .nav .menu::after { content: ""; display: inline-block; margin-left: 3px; vertical-align: 1px; border: 3px solid transparent; border-top: 4px solid; border-bottom: 0; }

    main { padding: 0 22px; }
    .crumbs { display: flex; padding-top: 7px; color: #555; }
    .crumbs li + li::before { content: "/"; padding: 0 9px 0 6px; color: #6c757d; }
    h1 { position: relative; padding: 16px 0 4px; border-bottom: 1px solid #000; font-size: 25px; line-height: 34px; }
    h1::after { content: ""; position: absolute; right: 20px; top: 100%; border: 8px solid transparent; border-top: 7px solid #000; border-bottom: 0; }
    .prose { padding: 16px 10px 25px; }
    .prose p + p { margin-top: 8px; }
    .prose svg { width: 7px; height: 10px; vertical-align: -1px; margin-left: 1px; }

    /* embedded report */
    .report { min-height: 2535px; padding: 0 18px 0 17px; color: #222; }
    .hero { display: grid; grid-template-columns: 1fr auto 1fr; height: 54px; padding-top: 4px; }
    .hero h2, .state-title { grid-column: 2; font-size: 18px; line-height: 25px; font-weight: 700; color: #3b3631; text-align: center; }
    .updated { margin-top: -4px; padding-left: 42px; text-align: center; font-size: 6px; line-height: 11px; white-space: nowrap; }
    .updated b { display: block; font-size: 4px; }
    .state-title { padding-top: 23px; }
    .head { display: grid; grid-template-columns: 100px 1fr 100px; }
    .head nd-logo { width: 94px; margin-left: 14px; }
    .head h3 { font-size: 11px; line-height: 15px; font-weight: 700; color: #3b3631; text-align: center; }
    .help { display: flex; align-items: flex-start; gap: 2px; align-self: end; justify-self: end; padding-right: 2px; color: #8a8a8a; text-align: center; white-space: nowrap; }
    .help p { font-size: 4px; line-height: 5px; }
    .help svg { width: 10px; height: 10px; margin-top: 1px; }
    .h-status { height: 51px; padding-top: 10px; }
    .h-status nd-logo { margin-top: 3px; }
    .h-status .help { padding-bottom: 3px; }
    .filters { display: grid; grid-template-columns: 1fr 56px 1fr; gap: 9px; margin-top: 3px; }
    .filters div { text-align: center; font-size: 5px; line-height: 8px; white-space: nowrap; padding-top: 1px; justify-self: end; }
    .filters div:last-child { justify-self: start; }
    .filters div span { display: block; color: #e07f6a; line-height: 10px; }
    .filters label { display: block; position: relative; margin-top: -2px; text-align: center; font-size: 4px; line-height: 8px; }
    .filters select { display: block; width: 100%; height: 13px; border: 1px solid #e8e8e8; background: #fff; padding: 0 2px; appearance: none; font-size: 4px; color: #333; }
    .filters svg { position: absolute; right: 2px; bottom: 5px; width: 5px; height: 3px; }

    .card { border: 1px solid #a6a6a6; border-radius: 4px; background: #fff; box-shadow: 0 0 4px rgba(0, 0, 0, 0.35); min-width: 0; min-height: 0; }
    .big, .mid { display: flex; align-items: center; justify-content: center; color: #000; }
    .card.big { font-size: 8px; line-height: 12px; font-weight: 700; }
    .card.mid { font-size: 5px; line-height: 8px; font-weight: 700; }
    .stat { display: flex; flex-direction: column; align-items: center; justify-content: center; text-align: center; font-size: 4px; line-height: 5px; white-space: nowrap; }
    .stat span { color: #222; }
    .stat b { font-weight: 400; font-size: 5px; line-height: 7px; }
    .stat.large b { font-size: 6px; line-height: 9px; }
    .stat.tight span { font-size: 3px; }
    .stat.huge b { font-size: 9px; line-height: 11px; }
    .stat.wrap { white-space: normal; padding: 0 6px; }
    .coral { color: #dd6a52; fill: #dd6a52; }
    .amber { color: #faa21b; fill: #fbab36; }
    .leaf { color: #6f964a; fill: #86a868; }
    .teal { color: #077280; fill: #2e8a95; }
    .wine { color: #a73338; }
    .hot { color: #d34727; }
    .plain { color: #222; }
    .ink { fill: #333; }
    .strong { fill: #000; font-weight: 700; }
    .chart { display: flex; flex-direction: column; }
    .chart h4 { font-size: 5px; line-height: 9px; text-align: center; color: #222; white-space: nowrap; }
    .plot { display: block; flex: 1 1 0; min-height: 0; width: 100%; overflow: visible; }
    .rule { fill: none; stroke: #cfcfcf; stroke-width: 0.6px; stroke-dasharray: 1 1.5; vector-effect: non-scaling-stroke; }
    .faint .rule { stroke: #ececec; }
    .trace { fill: none; stroke-width: 1px; vector-effect: non-scaling-stroke; stroke-linejoin: round; }
    .lead { fill: none; stroke: #999; stroke-width: 0.5px; vector-effect: non-scaling-stroke; }

    .status { display: grid; grid-template-columns: 81fr 281fr 81fr; gap: 4px; }
    .side, .center { display: grid; gap: 3px; }
    .side { grid-template-rows: 18px 14px 16px 15px 16px 14px 18px 19px 14px 19px 17px; }
    .center { grid-template-rows: 23px 75px 76px 24px; gap: 4px; }
    .pair { display: grid; grid-template-columns: 1fr 1fr; gap: 3px; }
    .total { display: flex; flex-direction: column; align-items: center; justify-content: center; font-size: 5px; line-height: 7px; }
    .total b { font-size: 10px; line-height: 12px; font-weight: 600; color: #dd6a52; }
    .slider { padding: 3px 3px 0; }
    .slider div { display: flex; gap: 2px; }
    .slider input[type="text"] { width: 25px; height: 11px; padding: 0 1px; border: 1px solid #eee; font-size: 4px; color: #222; background: #fff; }
    .slider input:disabled { color: #bbb; }
    .slider input[type="range"] { appearance: none; display: block; width: 100%; height: 8px; padding: 0 0 0 3px; background: none; }
    .slider input[type="range"]::-webkit-slider-runnable-track { height: 1px; background: #000; }
    .slider input[type="range"]::-webkit-slider-thumb { appearance: none; width: 7px; height: 7px; margin-top: -3px; border: 1px solid #333; border-radius: 50%; background: #fff; }

    .h-trends { height: 53px; padding-top: 11px; }
    .h-trends h3 { padding-top: 7px; }
    .h-trends .help { padding-bottom: 3px; }
    .trends { display: grid; grid-template-columns: 160fr 121fr 160fr; grid-template-rows: 101px 101px; gap: 5px 4px; }
    .middle { grid-column: 2; grid-row: 1 / 3; display: grid; grid-template-rows: 189px 14px; gap: 4px; }
    .perhead { display: grid; grid-template-columns: 145fr 147fr 147fr; gap: 6px; grid-template-rows: 101px; margin-top: 4px; }
    .press { padding: 0; font-size: 5px; line-height: 6px; color: #222; white-space: nowrap; }
    .press.gold { background: #faa21b; border-color: #c98a2b; }
    .press.green { background: #6f964a; border-color: #58803a; }
    .press.red { background: #d34727; border-color: #d9826c; }

    .h-two { padding-left: 4px; }
    .h-two .help { padding-bottom: 5px; }
    .intro { height: 53px; padding-top: 10px; }
    .care { height: 54px; padding-top: 11px; }
    .people { display: grid; grid-template-columns: 147fr 147fr 143fr; grid-template-rows: 185px; gap: 5px; padding-left: 4px; }
    .toggles { display: grid; grid-template-columns: 223fr 221fr; grid-template-rows: 14px; gap: 3px; padding: 4px 0 0 4px; }

    .hospital { display: grid; grid-template-columns: 303fr 143fr; gap: 4px; padding-left: 4px; }
    .hospital .big { height: 15px; }
    .beds { display: grid; grid-template-columns: 145fr 155fr; gap: 4px; }
    .beds > .left { display: grid; grid-template-rows: 71px 109px; gap: 4px; }
    .mids { display: grid; grid-template-columns: repeat(6, 1fr); grid-template-rows: 25px 24px 70px 25px 24px; gap: 4px; }
    .third { grid-column: span 2; }
    .half { grid-column: span 3; }
    .full { grid-column: span 6; }
    .deaths { display: grid; grid-template-rows: 25px 80px 71px; gap: 4px; }

    .h-map { height: 50px; padding-left: 5px; }
    .h-map nd-logo { margin-top: 7px; }
    .h-map h3 { padding-top: 10px; }
    .h-map .help { padding-bottom: 14px; }
    .counties { display: flex; }
    .modes { display: grid; grid-auto-rows: 17px; align-content: start; gap: 6px; width: 80px; margin: 32px 20px 0 19px; }
    .modes .press { font-size: 4px; border-radius: 4px; }
    .map { display: block; width: 65%; height: auto; }
    .county { stroke: #9a8078; stroke-width: 0.5px; vector-effect: non-scaling-stroke; }
    .county-name { fill: #fff; font-weight: 700; }
    .county-count { fill: #fff; fill-opacity: 0.7; }

    .powerbi { display: flex; align-items: center; height: 25px; margin: 0 10px; padding: 0 8px; border-top: 1px solid #c4c4c4; background: #eaeaea; color: #000; font-size: 9px; font-weight: 600; }
    .powerbi span { flex: 1; }
    .powerbi button { width: 11px; height: 14px; margin-left: 17px; padding: 0; border: 0; background: none; }
    .powerbi svg { display: block; width: 11px; height: 14px; }

    .serology { padding: 30px 0 0 10px; }
    .serology h2 { font-size: 13px; line-height: 18px; font-weight: 700; }
    .serology p { margin: 5px 0 6px; font: italic 9px/18px "Liberation Sans", sans-serif; }
    .tests { width: 71%; border-collapse: collapse; border: 1px solid #222; }
    .tests th, .tests td { padding: 0 0 0 1px; border: 1px solid #888; text-align: left; font-weight: 400; }
    .tests th:first-child { width: 33%; }
    .tests th:last-child { width: 19%; }
    .tests tr:first-child > * { border-top-color: #222; }
    .tests tr:last-child > * { border-bottom-color: #222; }
    .tests tr > :first-child { border-left-color: #222; }
    .tests tr > :last-child { border-right-color: #222; }

    .deaths-title { padding-top: 46px; font-size: 18px; line-height: 25px; }
    .causes { width: calc(100% - 20px); margin: 5px 10px 0; border-collapse: collapse; line-height: 15px; }
    .causes th, .causes td { padding: 5px 1px 5px 6px; border: 1px solid #ddd; text-align: left; vertical-align: top; }
    .causes thead th { border-bottom-width: 2px; }
    .causes th:last-child { width: 42px; }
    .causes b, .causes i { display: block; }
    .causes b.inline { display: inline; }
    .causes .blank td { height: 26px; }

    .folds { display: grid; gap: 20px; padding: 35px 10px 22px; }
    .folds button { display: flex; align-items: center; justify-content: space-between; height: 45px; padding: 0 17px; border: 1px solid #ddd; border-bottom-width: 2px; border-radius: 3px; background: #f5f5f5; font-size: 11px; font-weight: 700; color: #333; text-align: left; white-space: nowrap; }
    .folds svg { width: 9px; height: 9px; }

    footer { display: grid; grid-template-columns: 147px 150px 1fr; gap: 12px; height: 191px; padding: 23px 22px 0 24px; background: #796e65; color: #fff; font-size: 9px; }
    footer a { color: #fff; }
    .address a { text-decoration: underline; }
    .address .intranet { margin-top: 29px; }
    .links { display: flex; flex-wrap: wrap; align-content: flex-start; padding-left: 11px; }
    .links li { padding-right: 10px; }
    .links li + li::before { content: "|"; padding: 0 6px 0 1px; }
    .brand nd-logo { width: 130px; margin-left: 31px; }
    .brand ul { display: flex; align-items: center; gap: 9px; margin: 9px 0 0 14px; }
    .brand a { display: block; }
    .brand svg { display: block; height: 15px; width: auto; fill: #fff; }
    .tail { height: 18px; padding-left: 7px; }
    .tail button { position: relative; top: -6px; width: 86px; height: 24px; padding: 0; border: 0; border-radius: 5px 5px 0 0; background: #d34727; color: #fff; font-size: 10px; font-weight: 700; }
  `;

  private navItem(label: string, menu = false, on = false) {
    return html`<li class=${classMap({ on })}><a class=${classMap({ menu })} href="#">${label}</a></li>`;
  }

  private cause(cases: string, body: unknown) {
    return html`<tr><td>${body}</td><td>${cases}</td></tr>`;
  }

  private statusReport() {
    return html`
      <header class="head h-status">
        <nd-logo></nd-logo>
        <div>
          <h3>COVID-19 STATUS REPORT</h3>
          <div class="filters">
            <div>POPULATION<span>760,077</span></div>
            <label>COUNTY
              <select><option>All</option></select>
              <svg viewBox="0 0 10 6" aria-hidden="true"><path d="M0 0l5 5 5-5" fill="none" stroke="#777"></path></svg>
            </label>
            <div>% of POPULATION TESTED<span>27.32%</span></div>
          </div>
        </div>
        ${help}
      </header>
      <div class="status">
        ${sideStats("TODAY", "NEW TESTS", ["5,795", "5,597", "1,391", "244", "128", "4.36%"], "FIRST TIME TESTED", stat("RECOVERED", "218", "teal", "large"), "NEW POSITIVES")}
        <div class="center">
          <div class="card total"><span>ACTIVE POSITIVES</span><b>2,343</b></div>
          ${chart("ACTIVE POSITIVES", activePositives())}
          ${chart("14 DAY ROLLING AVERAGE POSITIVITY RATE (TOTAL TESTS)", positivityRate())}
          <div class="card slider">
            <div>
              <input type="text" aria-label="Start date" value="3/15/2020" disabled>
              <input type="text" aria-label="End date" value="9/10/2020">
            </div>
            <input type="range" aria-label="Date" min="0" max="179" value="179">
          </div>
        </div>
        ${sideStats("CUMULATIVE", "TESTS", ["523,783", "506,398", "215,076", "14,684", "4,892", "6.83%"], "UNIQUE INDIVIDUALS",
          html`<div class="pair">${stat("RECOVERED", "12,177", "teal", "large")}${stat("DEATHS", "164", "plain", "large")}</div>`, "POSITIVES")}
      </div>`;
  }

  private trends() {
    return html`
      <header class="head h-trends"><nd-logo></nd-logo><h3>COVID-19 TRENDS</h3>${help}</header>
      <div class="trends">
        ${chart("DAILY NEW POSITIVES", dailyNew())}
        <div class="middle">
          ${chart("AGE COMPARISON", ages())}
          <div class="pair">
            <button class="card press gold">PRESS FOR ACTIVES</button>
            <button class="card press">PRESS FOR POSITIVES</button>
          </div>
        </div>
        ${chart("CUMULATIVE POSITIVES AND RECOVERED", cumulative())}
        ${chart("DAILY UNIQUE AND SERIAL TESTS", dailyTests())}
        ${chart("14 DAY ROLLING AVERAGE DAILY TOTAL TESTS", totalTests())}
      </div>
      <div class="perhead">
        ${chart("PREVIOUSLY TESTED NEG. BEFORE POS. TEST", previouslyTested())}
        ${chart("14 DAYS of POSITIVES per 10,000 PEOPLE", fourteenDays())}
        ${chart("7 DAYS of POSITIVES per 100,000 PEOPLE", sevenDays())}
      </div>`;
  }

  private stateLevel() {
    return html`
      <h2 class="state-title">STATE LEVEL<br>INFORMATION</h2>
      <header class="head h-two intro"><nd-logo></nd-logo><h3>COVID-19 DEMOGRAPHICS and<br>SOURCE of EXPOSURE</h3>${help}</header>
      <div class="people">
        ${chart("GENDER", gender())}
        ${chart("SPREADTYPE", spread())}
        ${chart("RACE", race())}
      </div>
      <div class="toggles">
        <button class="card press green">PRESS FOR ACTIVE POSITIVES</button>
        <button class="card press">PRESS FOR CUMULATIVE POSITIVES</button>
      </div>`;
  }

  private hospital() {
    return html`
      <header class="head h-two care"><nd-logo></nd-logo><h3>STATE HOSPITALIZATIONS<br>and DEATHS</h3>${help}</header>
      <div class="hospital">
        <h3 class="card big">HOSPITALIZATIONS</h3>
        <h3 class="card big">DEATHS</h3>
        <div class="beds">
          <div class="left">
            ${chart("ACTIVE HOSPITALIZATIONS", activeHospital())}
            ${chart("AGE OF TOTAL HOSPITALIZED", ageHospital())}
          </div>
          <div class="mids">
            ${stat("COVID ACTIVE NON-ICU", "42", "wine", "huge wrap third")}
            ${stat("COVID ACTIVE HOSPITALIZATIONS", "64", "plain", "huge wrap third")}
            ${stat("COVID ACTIVE ICU", "22", "teal", "huge third")}
            ${stat("COVID TOTAL NON-ICU", "461", "wine", "huge wrap third")}
            ${stat("COVID TOTAL HOSPITALIZATIONS", "630", "plain", "huge wrap third")}
            ${stat("COVID TOTAL ICU", "169", "teal", "huge third")}
            ${chart("OCCUPIED NON-ICU BEDS", bedsGeneral(), "half")}
            ${chart("OCCUPIED ICU BEDS", bedsIcu(), "half")}
            ${stat("NON-ICU BEDS OCCUPIED DUE TO COVID", "2.46%", "wine", "huge tight half")}
            ${stat("ICU BEDS OCCUPIED DUE TO COVID", "7.33%", "teal", "huge wrap half")}
            ${stat("AVERAGE HOSPITALIZATION LENGTH OF STAY (DAYS)", "8.16", "amber", "huge full")}
          </div>
        </div>
        <div class="deaths">
          ${stat("CUMULATIVE DEATHS", "164", "hot", "huge")}
          ${chart("CUMULATIVE DEATHS BY AGE GROUP", deathsByAge())}
          ${chart("DEATHS BY MONTH", deathsByMonth())}
        </div>
      </div>`;
  }

  private analysis() {
    return html`
      <header class="head h-map"><nd-logo></nd-logo><h3>NORTH DAKOTA COUNTY<br>ANALYSIS</h3>${help}</header>
      <div class="counties">
        <div class="modes">
          <button class="card press red">PRESS FOR ACTIVE POSITIVES</button>
          <button class="card press">PRESS FOR DAILY POSITIVES</button>
          <button class="card press">PRESS FOR CUMULATIVE POSITIVES</button>
          <button class="card press">PRESS FOR CUMULATIVE DEATHS</button>
          <button class="card press">PRESS FOR ACTIVE PER 10K</button>
        </div>
        ${countyMap()}
      </div>`;
  }

  render() {
    return html`
      <div class="portal">
        <span class="state">North Dakota</span>
        <span class="nd">nd.gov</span>
        <p>Official Portal for<br>North Dakota State Government</p>
      </div>
      <header class="mast">
        <nd-logo></nd-logo>
        <form class="search" role="search">
          <input type="text" aria-label="Search" placeholder="Enter Keywords">
          <button type="button" aria-label="Search">
            <svg viewBox="0 0 16 16" aria-hidden="true"><circle cx="6.5" cy="6.5" r="4.6" fill="none" stroke="#fff" stroke-width="2.2"></circle><path d="M10 10l4.6 4.6" stroke="#fff" stroke-width="2.6" stroke-linecap="round"></path></svg>
          </button>
        </form>
      </header>
      <nav>
        <ul class="nav">
          ${this.navItem("Home")}${this.navItem("How we help", true, true)}${this.navItem("Who We Serve", true)}
          ${this.navItem("Health Topics A-Z")}${this.navItem("News")}${this.navItem("Events")}${this.navItem("About Us")}${this.navItem("Report Fraud")}
        </ul>
      </nav>
      <main>
        <ul class="crumbs">
          <li><a href="#">Home</a></li><li><a href="#">Diseases &amp; Conditions</a></li><li><a href="#">Coronavirus</a></li><li>Coronavirus Cases</li>
        </ul>
        <h1>Coronavirus Cases</h1>
        <div class="prose">
          <p>WELCOME to the refreshed COVID-19 dashboard. In this revised format, you’ll find new county-level breakdowns, as well as additional statewide data. The dashboard is best viewed on a computer, but turning your mobile device to landscape will improve your experience. We welcome your feedback!</p>
          <p><a href="#">Share Your Feedback<svg viewBox="0 0 10 10" aria-hidden="true"><path d="M4 3H.5v6.500h6V7M4 .5h5.500V6L7.800 4.300 5 7 3 5l2.700-2.700z" fill="#fff" stroke="#888" stroke-width=".9"></path></svg></a></p>
          <p>The North Dakota Department of Health dashboard is updated daily by 11 am and includes cases reported through the previous day. The investigations are ongoing and information on the website is likely to change as cases are investigated. The information on the dashboard is the most up to date and may be different than previous news releases.</p>
        </div>

        <section class="report">
          <div class="hero">
            <h2>STATE and COUNTY<br>LEVEL INFORMATION</h2>
            <p class="updated"><b>LAST UPDATED</b>9/11/2020 9:20:36 AM</p>
          </div>
          ${this.statusReport()}
          ${this.trends()}
          ${this.stateLevel()}
          ${this.hospital()}
          ${this.analysis()}
        </section>
        <div class="powerbi">
          <span>Microsoft Power BI</span>
          <button aria-label="Share"><svg viewBox="0 0 16 20" aria-hidden="true"><path d="M3 6H1v12.500h11.500V16M3.500 14.500c.5-5 3-7.500 7-7.500V3.500L15 8.500l-4.500 5V10c-3 0-5 1-7 4.500z" fill="none" stroke="#000" stroke-width="1.200"></path></svg></button>
          <button aria-label="Full screen"><svg viewBox="0 0 16 20" aria-hidden="true"><path d="M2 18L14 2M9.500 2H14v5M2 13v5h4.500" fill="none" stroke="#000" stroke-width="1.300"></path></svg></button>
        </div>

        <section class="serology">
          <h2>Serology Testing</h2>
          <p>Reported serology tests are completed in a laboratory and do not include point of care serology tests. Individuals who complete an antibody and a PCR test maybe be counted in totals for both.</p>
          <table class="tests">
            <tr><th scope="col">Detected</th><th scope="col">Not Detected</th><th scope="col">Total</th></tr>
            <tr><td>367</td><td>8611</td><td>8978</td></tr>
          </table>
        </section>

        <h2 class="deaths-title">Deaths</h2>
        <table class="causes">
          <thead><tr><th>Cause</th><th>Cases</th></tr></thead>
          <tbody>
            ${this.cause("130", html`<b>Deaths Due to COVID-19</b><i>Official number of individuals who died from COVID-19 as stated on the official death record. There will be a delay - by state law, a death record must be filed within 10 days of the date of death.</i>`)}
            ${this.cause("28", html`<b>Deaths Where COVID-19 is Not the Primary Cause</b><i>Deaths that list something other than COVID-19 as the official cause of death.</i>`)}
            ${this.cause("6", html`<b>Pending Death Records</b><i>The number of deaths where an official death record has not been filed. Per state law, this can take up to 10 days from the date of death.</i>`)}
            ${this.cause("164", html`<b class="inline">Total</b> number of individuals who tested positive and died from any cause while infected with COVID-19.`)}
            <tr class="blank"><td></td><td></td></tr>
            ${this.cause("3", html`<b>Deaths of Individuals Presumed Positive</b>Deaths of individuals where COVID-19 was listed as the cause of death on the official death record, but there was not a positive test result. These individuals are presumed positive by the health care provider based on symptoms and/or exposure.`)}
          </tbody>
        </table>

        <div class="folds">
          ${["By County - Total Tests Completed & Positive Cases", "By City & County – Long Term Care Cases & Deaths", "By County - Total Unique Tests, Positives, Negatives, Recovered, and Deaths", "By County - Source of Exposure", "By County - Rate per 100,000"].map(
            (t) => html`<button aria-expanded="false">${t}<svg viewBox="0 0 14 14" aria-hidden="true"><path d="M7 1v12M1 7h12" stroke="#1a73ae" stroke-width="3" stroke-linecap="round"></path></svg></button>`)}
        </div>
      </main>
      <footer>
        <div class="address">
          <p>Copyright © 2019 <a href="#">North Dakota Department of Health</a></p>
          <p>600 East Boulevard Ave Bismarck, ND 58505-0200</p>
          <p>Phone: 701-328-2372</p>
          <p><a href="#">Contact Us</a></p>
          <p class="intranet"><a href="#">Intranet</a></p>
        </div>
        <ul class="links">
          <li><a href="#">Accessibility</a></li><li><a href="#">Contact</a></li><li><a href="#">Disclaimer</a></li><li><a href="#">Privacy Policy</a></li><li><a href="#">Security Policy</a></li>
        </ul>
        <div class="brand">
          <nd-logo light></nd-logo>
          <ul>
            <li><a href="#" aria-label="Email"><svg viewBox="0 0 512 448"><path transform="translate(0 -32)" d="M502.3 190.8c3.9-3.1 9.700-.2 9.700 4.700V400c0 26.500-21.500 48-48 48H48c-26.500 0-48-21.500-48-48V195.600c0-5 5.700-7.800 9.700-4.700 22.400 17.400 52.100 39.500 154.100 113.600 21.100 15.400 56.700 47.800 92.200 47.600 35.700.3 72-32.800 92.300-47.600 102-74.100 131.600-96.300 154-113.700zM256 320c23.200.4 56.600-29.200 73.400-41.400 132.700-96.300 142.800-104.700 173.400-128.700 5.800-4.500 9.200-11.500 9.200-18.900v-19c0-26.500-21.500-48-48-48H48c-26.500 0-48 21.500-48 48v19c0 7.400 3.400 14.300 9.200 18.900 30.600 23.900 40.700 32.400 173.400 128.700 16.800 12.200 50.200 41.800 73.400 41.400z"></path></svg></a></li>
            <li><a href="#" aria-label="Facebook"><svg viewBox="0 32 448 448"><path d="M448 80v352c0 26.500-21.500 48-48 48h-85.300V302.800h60.600l8.700-67.600h-69.300V192c0-19.600 5.400-32.900 33.500-32.900H384V98.700c-6.200-.8-27.400-2.700-52.200-2.700-51.600 0-87 31.500-87 89.400v49.900H184v67.600h60.900V480H48c-26.500 0-48-21.500-48-48V80c0-26.500 21.500-48 48-48h352c26.500 0 48 21.500 48 48z"></path></svg></a></li>
            <li><a href="#" aria-label="Twitter"><svg viewBox="0 32 448 448"><path d="M400 32H48C21.500 32 0 53.500 0 80v352c0 26.500 21.500 48 48 48h352c26.500 0 48-21.500 48-48V80c0-26.500-21.500-48-48-48zm-48.900 158.800c.2 2.800.2 5.700.2 8.500 0 86.700-66 186.600-186.600 186.600-37.200 0-71.700-10.800-100.700-29.400 5.300.6 10.400.8 15.800.8 30.700 0 58.900-10.400 81.400-28-28.800-.6-53-19.500-61.300-45.500 10.100 1.500 19.200 1.500 29.600-1.200-30-6.100-52.500-32.500-52.500-64.400v-.8c8.700 4.900 18.900 7.900 29.600 8.300a65.447 65.447 0 0 1-29.200-54.600c0-12.200 3.200-23.400 8.900-33.100 32.300 39.800 80.800 65.800 135.200 68.600-9.300-44.500 24-80.600 64-80.600 18.900 0 35.900 7.900 47.900 20.700 14.800-2.800 29-8.300 41.600-15.800-4.900 15.200-15.200 28-28.800 36.100 13.200-1.400 26-5.100 37.800-10.200-8.900 13.100-20.100 24.700-32.900 34z"></path></svg></a></li>
            <li><a href="#" aria-label="YouTube"><svg viewBox="0 32 448 448"><path d="M186.800 202.100l95.200 54.100-95.200 54.100V202.100zM448 80v352c0 26.500-21.500 48-48 48H48c-26.500 0-48-21.500-48-48V80c0-26.500 21.500-48 48-48h352c26.500 0 48 21.500 48 48zm-42 176.300s0-59.600-7.600-88.200c-4.200-15.800-16.500-28.200-32.200-32.400C337.900 128 224 128 224 128s-113.900 0-142.200 7.700c-15.700 4.200-28 16.600-32.200 32.400-7.600 28.500-7.600 88.200-7.600 88.200s0 59.600 7.600 88.200c4.200 15.800 16.500 27.700 32.200 31.900C110.100 384 224 384 224 384s113.900 0 142.200-7.700c15.700-4.200 28-16.100 32.200-31.900 7.600-28.500 7.600-88.100 7.600-88.100z"></path></svg></a></li>
          </ul>
        </div>
      </footer>
      <div class="tail"><button>Feedback (+)</button></div>`;
  }
}
